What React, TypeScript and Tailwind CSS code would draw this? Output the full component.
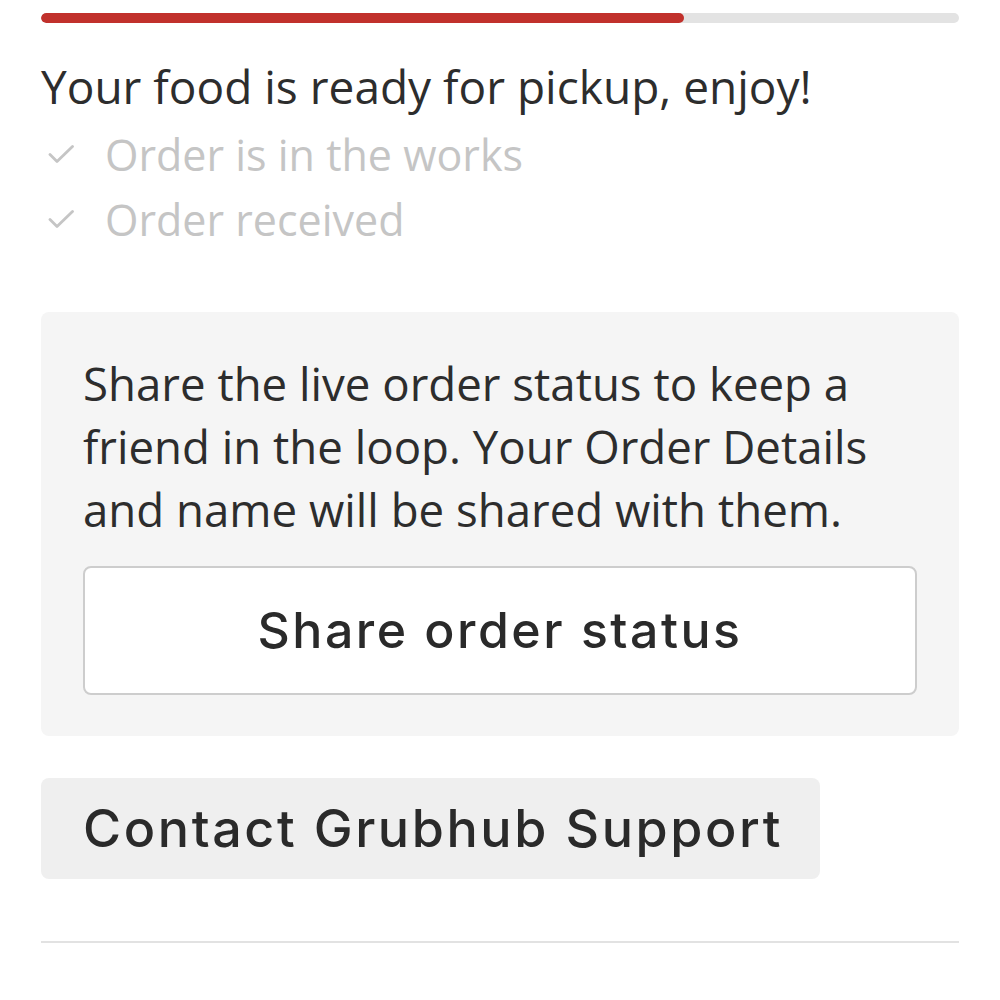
const steps = ['Order is in the works', 'Order received'];

function CheckMark() {
  return (
    <svg width="26" height="19" viewBox="0 0 26 19" fill="none" className="ml-[7px] shrink-0">
      <polyline points="2,9.5 9,16.5 24.5,1.5" stroke="currentColor" strokeWidth="2.8" strokeLinecap="round" strokeLinejoin="round" />
    </svg>
  );
}

export default function App() {
  const progress = 70;

  return (
    <div className="min-h-screen bg-white px-[41px] pt-[13px] font-['Open_Sans',sans-serif] text-[#2d2d2d]">
      {/* Progress */}
      <div className="h-[10px] w-full overflow-hidden rounded-full bg-[#e3e3e3]">
        <div className="h-full rounded-full bg-[#c1312c]" style={{ width: `${progress}%` }} />
      </div>

      <h1 className="mt-[33px] text-[46px] leading-[60px] font-normal">Your food is ready for pickup, enjoy!</h1>

      <ul className="mt-[6px] flex flex-col">
        {steps.map((step) => (
          <li key={step} className="flex h-[65px] items-center gap-[31px] text-[#c5c5c5]">
            <CheckMark />
            <span className="text-[43px] leading-none">{step}</span>
          </li>
        ))}
      </ul>

      {/* Share card */}
      <div className="mt-[60px] rounded-lg bg-[#f5f5f5] px-[42px] pt-[40px] pb-[41px]">
        <p className="text-[45.6px] leading-[63px]">
          Share the live order status to keep a friend in the loop. Your Order Details and name will be shared with them.
        </p>
        <button className="mt-[25px] flex h-[129px] w-full items-center justify-center rounded-lg border-2 border-[#cdcdcd] bg-white font-['Inter',sans-serif] text-[50px] font-medium tracking-[0.05em] whitespace-nowrap text-[#2a2a2a]">
          Share order status
        </button>
      </div>

      <button className="mt-[42px] flex h-[101px] w-[779px] items-center justify-start rounded-lg bg-[#efefef] px-[42px] font-['Inter',sans-serif] text-[52px] font-medium tracking-[0.05em] whitespace-nowrap text-[#2a2a2a]">
        Contact Grubhub Support
      </button>

      <div className="mt-[62px] h-[2px] w-full bg-[#e2e2e2]" />
    </div>
  );
}
